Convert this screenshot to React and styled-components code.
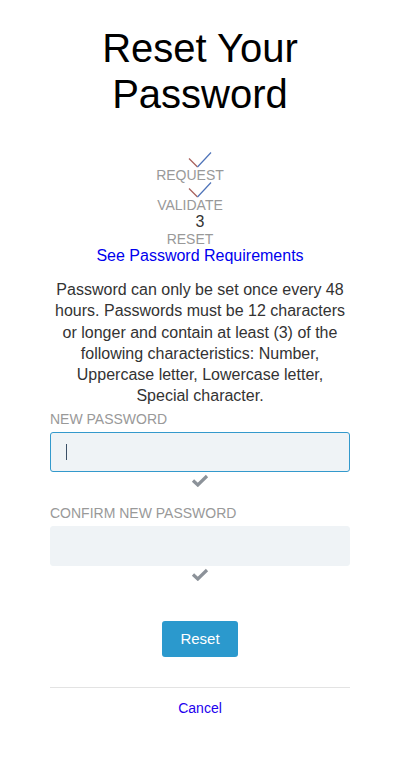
import React from 'react'
import styled, {createGlobalStyle} from 'styled-components'

const GlobalStyle = createGlobalStyle`
  body {
    margin: 0;
    background: #ffffff;
    font-family: 'Liberation Sans', Arial, sans-serif;
  }
`

const Page = styled.div`
  width: 300px;
  margin: 0 auto;
  padding-top: 25px;
  display: flex;
  flex-direction: column;
  align-items: stretch;
`

const Title = styled.h1`
  margin: 0;
  font-size: 40px;
  line-height: 46px;
  font-weight: 400;
  color: #000;
  text-align: center;
`

const Steps = styled.ol`
  list-style: none;
  margin: 36px 0 0;
  padding: 0;
  display: flex;
  flex-direction: column;
  align-items: center;
`

const Step = styled.li`
  display: flex;
  flex-direction: column;
  align-items: center;
`

const StepMark = styled.div`
  height: ${p => p.$tall ? 17 : 15}px;
  display: flex;
  align-items: flex-end;
  justify-content: center;
  font-size: 16px;
  line-height: 16px;
  color: #333;
`

const StepLabel = styled.span`
  font-size: 14px;
  line-height: 15px;
  color: #999;
  text-transform: uppercase;
  margin-right: 20px;
  margin-top: ${p => p.$low ? 2 : 0}px;
`

const RequirementsLink = styled.a`
  display: block;
  text-align: center;
  font-size: 16px;
  line-height: 18px;
  color: #0000ee;
  text-decoration: none;
`

const Description = styled.p`
  margin: 14px 0 0;
  font-size: 16px;
  line-height: 21.3px;
  color: #333;
  text-align: center;
`

const FieldGroup = styled.div`
  display: flex;
  flex-direction: column;
  margin-top: ${p => p.$first ? 4 : 17}px;
`

const Label = styled.label`
  font-size: 14px;
  line-height: 16px;
  color: #999;
  text-transform: uppercase;
  margin-bottom: 5px;
`

const Field = styled.div`
  height: 40px;
  box-sizing: border-box;
  display: flex;
  align-items: center;
  padding: 0 15px;
  background: #eff3f6;
  border: 1px solid ${p => p.$focused ? '#3399cc' : '#eff3f6'};
  border-radius: 3px;
`

const Caret = styled.span`
  width: 1px;
  height: 16px;
  background: #3a4f66;
`

const Input = styled.input`
  flex: 1;
  min-width: 0;
  border: none;
  outline: none;
  background: transparent;
  font-size: 14px;
  font-family: inherit;
  padding: 0;
`

const ValidIcon = styled.div`
  display: flex;
  justify-content: center;
  padding-top: 2px;
  height: 14px;
`

const ButtonRow = styled.div`
  display: flex;
  justify-content: center;
  margin-top: 39px;
`

const Button = styled.button`
  width: 76px;
  height: 36px;
  border: none;
  border-radius: 3px;
  background: #2b99cd;
  color: #fff;
  font-family: inherit;
  font-size: 15px;
`

const Divider = styled.hr`
  border: none;
  border-top: 1px solid #e3e3e3;
  margin: 30px 0 0;
`

const CancelLink = styled.a`
  display: block;
  text-align: center;
  margin-top: 12px;
  font-size: 14px;
  line-height: 16px;
  color: #2200ee;
  text-decoration: none;
`

const ThinCheck = () =>
  <svg width="26" height="17" viewBox="0 0 26 17">
    <path d="M2 7.5 L10.5 16" stroke="#a8605c" strokeWidth="1.2" fill="none"/>
    <path d="M10.5 16 L24 1.5" stroke="#4d72b8" strokeWidth="1.2" fill="none"/>
  </svg>

const BoldCheck = () =>
  <svg width="18" height="13" viewBox="0 0 18 13">
    <path d="M2 6.5 L6.8 11 L16 2" stroke="#8c9299" strokeWidth="3.2" fill="none" strokeLinejoin="miter"/>
  </svg>

const steps = [
  {label: 'Request', done: true},
  {label: 'Validate', done: true},
  {label: 'Reset', done: false, number: 3},
]

export default function App() {
  return (
    <Page>
      <GlobalStyle/>
      <Title>Reset Your Password</Title>
      <Steps>
        {steps.map(s =>
          <Step key={s.label}>
            <StepMark $tall={!s.done}>
              {s.done ? <ThinCheck/> : s.number}
            </StepMark>
            <StepLabel $low={!s.done}>{s.label}</StepLabel>
          </Step>)}
      </Steps>
      <RequirementsLink href="#">See Password Requirements</RequirementsLink>
      <Description>
        Password can only be set once every 48 hours. Passwords must be 12 characters or longer and contain at least (3) of the following characteristics: Number, Uppercase letter, Lowercase letter, Special character.
      </Description>
      <FieldGroup $first>
        <Label>New Password</Label>
        <Field $focused>
          <Caret/>
          <Input type="password"/>
        </Field>
        <ValidIcon><BoldCheck/></ValidIcon>
      </FieldGroup>
      <FieldGroup>
        <Label>Confirm New Password</Label>
        <Field>
          <Input type="password"/>
        </Field>
        <ValidIcon><BoldCheck/></ValidIcon>
      </FieldGroup>
      <ButtonRow>
        <Button>Reset</Button>
      </ButtonRow>
      <Divider/>
      <CancelLink href="#">Cancel</CancelLink>
    </Page>
  )
}
